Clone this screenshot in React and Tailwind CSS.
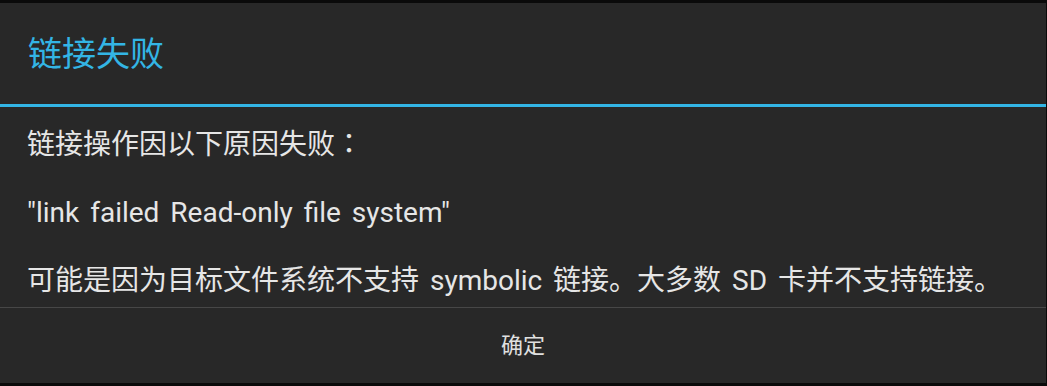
const font = { fontFamily: '"Roboto", "Noto Sans CJK SC", sans-serif' };

export default function App() {
  return (
    <div className="w-[1047px] h-[386px] bg-[#0a0a0a] pt-[3px] pr-[1px] pb-[3px]" style={font}>
      <div className="flex flex-col h-full bg-[#282828]">
        {/* Title */}
        <div className="h-[101px] flex items-center px-[28px]">
          <h1 className="text-[34px] leading-none text-[#33b5e5]">链接失败</h1>
        </div>
        <div className="h-[3px] bg-[#33b5e5]" />

        {/* Message */}
        <div className="h-[200px] pt-[18px] px-[27px] text-[28px] leading-[34px] text-[#e6e6e6] [word-spacing:4px]">
          <p>
            链接操作因以下原因失败
            <span className="font-['Noto_Sans_CJK_TC',sans-serif]">：</span>
          </p>
          <p className="mt-[34px]">"link failed Read-only file system"</p>
          <p className="mt-[34px]">可能是因为目标文件系统不支持 symbolic 链接。大多数 SD 卡并不支持链接。</p>
        </div>
        <div className="h-px bg-[#474747]" />

        {/* Button */}
        <button className="flex-1 flex items-center justify-center text-[22px] text-[#e0e0e0]">
          确定
        </button>
      </div>
    </div>
  );
}
